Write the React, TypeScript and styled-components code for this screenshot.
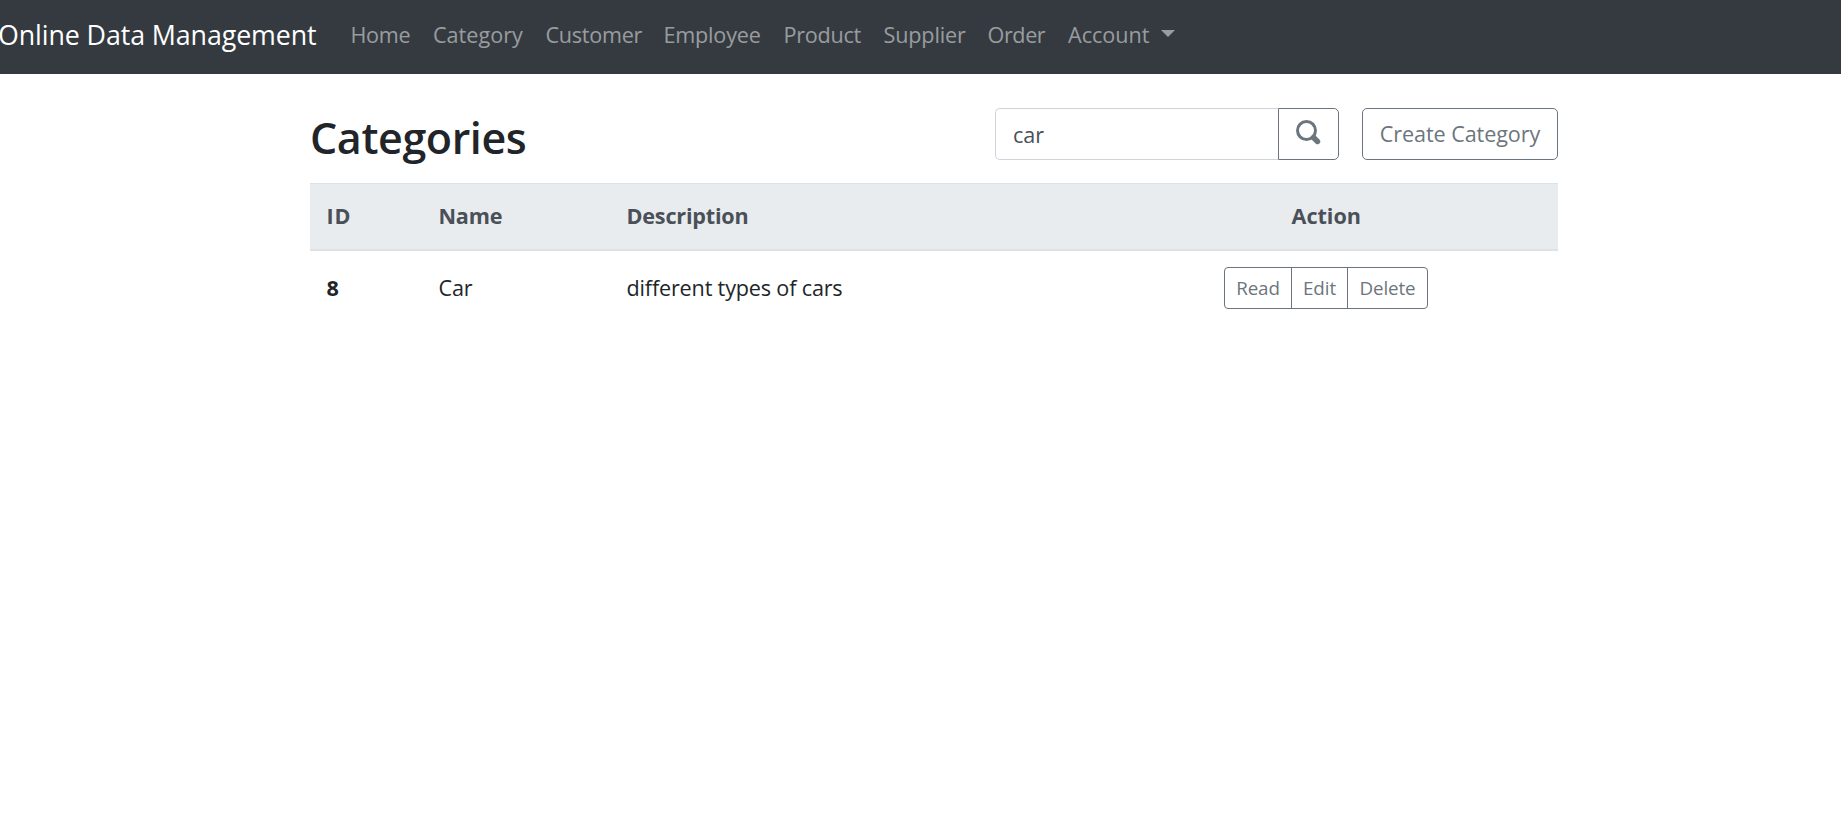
import React from "react";
import styled, { createGlobalStyle } from "styled-components";

const GlobalStyle = createGlobalStyle`
  *, *::before, *::after { box-sizing: border-box; }
  body {
    margin: 0;
    background: #fff;
    color: #212529;
    font-family: "Open Sans", "Noto Sans", sans-serif;
    font-size: 21.6px;
    line-height: 32px;
    overflow: hidden;
  }
`;

const Navbar = styled.nav`
  display: flex;
  align-items: center;
  height: 74px;
  padding-bottom: 5px;
  background: #343a40;
  white-space: nowrap;
`;

const Brand = styled.a`
  width: 352.5px;
  margin-left: -2px;
  flex: none;
  color: #fff;
  font-size: 26.8px;
  letter-spacing: -0.1px;
`;

const NavLink = styled.a<{ $width: number; $spacing?: number }>`
  display: flex;
  align-items: center;
  flex: none;
  width: ${(p) => p.$width}px;
  color: rgba(255, 255, 255, 0.5);
  letter-spacing: ${(p) => p.$spacing ?? 0}px;
`;

const Caret = styled.span`
  margin-left: 11px;
  margin-bottom: 3px;
  border-top: 7px solid;
  border-left: 7px solid transparent;
  border-right: 7px solid transparent;
`;

const Container = styled.main`
  width: 1248px;
  margin: 34px 0 0 310px;
`;

const Header = styled.header`
  display: flex;
  align-items: flex-start;
  height: 75px;
`;

const Title = styled.h1`
  flex: 1;
  margin: 4px 0 0;
  font-size: 43px;
  font-weight: 600;
  line-height: 52px;
  letter-spacing: -0.4px;
`;

const SearchGroup = styled.form`
  display: flex;
  width: 344px;
  height: 52px;
  margin-right: 23px;
`;

const SearchInput = styled.input`
  width: 283px;
  padding: 1px 17px 0;
  border: 1px solid #ced4da;
  border-right: 0;
  border-radius: 5px 0 0 5px;
  outline: 0;
  color: #495057;
  font: inherit;
`;

const OutlineButton = styled.button`
  display: flex;
  align-items: center;
  justify-content: center;
  padding: 0;
  border: 1px solid #6c757d;
  border-radius: 5px;
  background: transparent;
  color: #6c757d;
  font: inherit;
  white-space: nowrap;
`;

const SearchButton = styled(OutlineButton)`
  width: 61px;
  padding-right: 2px;
  border-radius: 0 5px 5px 0;
`;

const CreateButton = styled(OutlineButton)`
  width: 196px;
  height: 52px;
  letter-spacing: -0.1px;
`;

const Table = styled.table`
  width: 100%;
  table-layout: fixed;
  border-collapse: separate;
  border-spacing: 0;
  text-align: left;
`;

const HeadCell = styled.th<{ $width: number; $center?: boolean; $spacing?: number }>`
  width: ${(p) => p.$width}px;
  height: 68px;
  padding: 0 16px 1px 16.5px;
  border-top: 1px solid #dee2e6;
  border-bottom: 2px solid #dee2e6;
  background: #e9ecef;
  color: #495057;
  font-weight: 700;
  text-align: ${(p) => (p.$center ? "center" : "left")};
  letter-spacing: ${(p) => p.$spacing ?? 0}px;
`;

const Cell = styled.td<{ $bold?: boolean }>`
  height: 74px;
  padding: 0 16px 0 16.5px;
  font-weight: ${(p) => (p.$bold ? 700 : 400)};
  letter-spacing: -0.17px;
`;

const ActionCell = styled(Cell)`
  padding: 0 16px;
`;

const ButtonGroup = styled.div`
  display: flex;
  justify-content: center;
`;

const ActionButton = styled(OutlineButton)<{ $width: number }>`
  width: ${(p) => p.$width}px;
  height: 42px;
  border-radius: 0;
  font-size: 18.8px;
  letter-spacing: -0.1px;

  & + & { margin-left: -1px; }
  &:first-child { border-radius: 4px 0 0 4px; }
  &:last-child { border-radius: 0 4px 4px 0; }
`;

const Magnifier = styled.svg`
  display: block;
  margin-bottom: 4px;
`;

const SearchIcon = () => (
  <Magnifier width="26" height="26" viewBox="0 0 26 26" fill="none" stroke="currentColor">
    <circle cx="11.5" cy="11.5" r="9" strokeWidth="3" />
    <path d="M18.5 18.5l4 4" strokeWidth="5.4" strokeLinecap="round" />
  </Magnifier>
);

const links = [
  { label: "Home", width: 82.5, spacing: -0.3 },
  { label: "Category", width: 112.5, spacing: 0 },
  { label: "Customer", width: 118, spacing: -0.26 },
  { label: "Employee", width: 120, spacing: -0.2 },
  { label: "Product", width: 100, spacing: -0.27 },
  { label: "Supplier", width: 104, spacing: -0.15 },
  { label: "Order", width: 80.5, spacing: -0.4 },
];

export default function App() {
  return (
    <>
      <GlobalStyle />
      <Navbar>
        <Brand>Online Data Management</Brand>
        {links.map((l) => (
          <NavLink key={l.label} $width={l.width} $spacing={l.spacing}>
            {l.label}
          </NavLink>
        ))}
        <NavLink $width={110}>
          Account
          <Caret />
        </NavLink>
      </Navbar>
      <Container>
        <Header>
          <Title>Categories</Title>
          <SearchGroup>
            <SearchInput defaultValue="car" aria-label="Search" />
            <SearchButton type="button" aria-label="Search">
              <SearchIcon />
            </SearchButton>
          </SearchGroup>
          <CreateButton>Create Category</CreateButton>
        </Header>
        <Table>
          <thead>
            <tr>
              <HeadCell $width={112} $spacing={0.9}>ID</HeadCell>
              <HeadCell $width={188} $spacing={-0.2}>Name</HeadCell>
              <HeadCell $width={484} $spacing={-0.2}>Description</HeadCell>
              <HeadCell $width={464} $center>Action</HeadCell>
            </tr>
          </thead>
          <tbody>
            <tr>
              <Cell $bold>8</Cell>
              <Cell>Car</Cell>
              <Cell>different types of cars</Cell>
              <ActionCell>
                <ButtonGroup>
                  <ActionButton $width={68}>Read</ActionButton>
                  <ActionButton $width={57}>Edit</ActionButton>
                  <ActionButton $width={81}>Delete</ActionButton>
                </ButtonGroup>
              </ActionCell>
            </tr>
          </tbody>
        </Table>
      </Container>
    </>
  );
}
